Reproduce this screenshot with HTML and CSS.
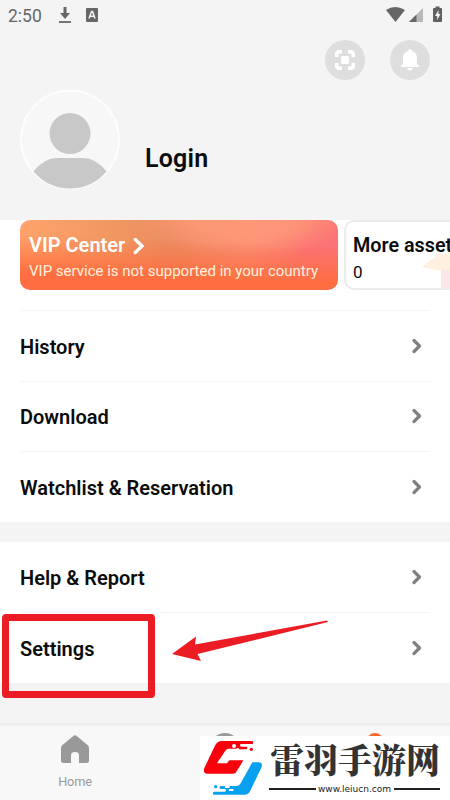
FILE: index.html
```html
<!DOCTYPE html>
<html lang="en">
<head>
<meta charset="utf-8">
<title>Profile</title>
<link rel="stylesheet" href="styles.css">
</head>
<body>
<div class="screen">
  <header class="statusbar">
    <span class="clock">2:50</span>
    <svg class="dl" width="14" height="18" viewBox="0 0 14 18"><path d="M7 1v9" stroke="#666" stroke-width="3"/><path d="M2 7h10l-5 6z" fill="#666"/><path d="M1 16h12" stroke="#666" stroke-width="1.8"/></svg>
    <svg class="abox" width="12" height="14" viewBox="0 0 12 14"><rect width="12" height="14" rx="1" fill="#666"/><path d="M3 10.5L5.6 3.5h1L9 10.5M4 8.3h4" fill="none" stroke="#f3f3f3" stroke-width="1.5"/></svg>
    <svg class="signals" width="60" height="18" viewBox="0 0 60 18"><path d="M1 4Q10 -2 20 4L10.500 16z" fill="#666"/><path d="M38 2v14H24z" fill="#b8b8b8"/><path d="M31.500 8.500V16H24z" fill="#666"/><path d="M49 2h1.500V.5h4V2H56q1 0 1 1v12q0 1-1 1h-7q-1 0-1-1V3q0-1 1-1z" fill="#606060"/><path d="M53.500 4L50 10h2.200v4L55.500 8h-2z" fill="#f3f3f3"/></svg>
  </header>
  <div class="actions">
    <span class="round"><svg width="22" height="22" viewBox="0 0 22 22"><path d="M2.700 8V5.500q0-2.800 2.800-2.800H8M14 2.700h2.500q2.800 0 2.800 2.800V8M19.300 14v2.500q0 2.800-2.800 2.800H14M8 19.300H5.500q-2.800 0-2.800-2.800V14" fill="none" stroke="#fff" stroke-width="3.600"/><rect x="7" y="7" width="8" height="8" rx="1.500" fill="#fff"/></svg></span>
    <span class="round"><svg width="20" height="24" viewBox="0 0 20 24"><path d="M10 1q2 0 2 2 5 1.300 5 7v5.500q0 1.500 2 2V19H1v-1.500q2-.5 2-2V10q0-5.700 5-7 0-2 2-2zM7 20h6q-.5 2.500-3 2.500T7 20z" fill="#fff"/></svg></span>
  </div>
  <section class="account">
    <svg width="100" height="100" viewBox="0 0 100 100"><circle cx="50" cy="49.500" r="49" fill="#f7f7f7" stroke="#fdfdfd" stroke-width="2"/><circle cx="50" cy="43.500" r="20.500" fill="#c8c8c8"/><path d="M13.500 81.500Q24 68 37 68H63Q76 68 86.500 81.500Q72 98.500 50 98.500T13.500 81.500z" fill="#c8c8c8"/></svg>
    <span class="login">Login</span>
  </section>
  <section class="cards">
    <div class="vip">
      <div class="card-title">VIP Center <svg width="12" height="18" viewBox="0 0 12 18"><path d="M2.300 2.500L9 9l-6.700 6.500" fill="none" stroke="#fff" stroke-width="3.300" stroke-linecap="round"/></svg></div>
      <div class="vip-sub">VIP service is not supported in your country</div>
    </div>
    <div class="assets">
      <svg class="deco" width="30" height="36" viewBox="0 0 30 36"><path d="M0 14L18 0l12 2v17L3 15z" fill="#fff0df"/><path d="M19 16l11 2v18H19z" fill="#fae8e8"/></svg>
      <div class="card-title">More assets</div>
      <div class="count">0</div>
    </div>
  </section>
  <nav class="menu">
    <div class="row">History<svg width="12" height="16" viewBox="0 0 12 16"><path d="M3 2.500L8.500 8 3 13.500" class="chev"/></svg></div>
    <div class="row">Download<svg width="12" height="16" viewBox="0 0 12 16"><path d="M3 2.500L8.500 8 3 13.500" class="chev"/></svg></div>
    <div class="row">Watchlist &amp; Reservation<svg width="12" height="16" viewBox="0 0 12 16"><path d="M3 2.500L8.500 8 3 13.500" class="chev"/></svg></div>
  </nav>
  <nav class="menu support">
    <div class="row">Help &amp; Report<svg width="12" height="16" viewBox="0 0 12 16"><path d="M3 2.500L8.500 8 3 13.500" class="chev"/></svg></div>
    <div class="row">Settings<svg width="12" height="16" viewBox="0 0 12 16"><path d="M3 2.500L8.500 8 3 13.500" class="chev"/></svg></div>
  </nav>
  <footer class="tabs">
    <div class="tab"><svg width="28" height="28" viewBox="0 0 28 28"><path d="M12.300 1q1.700-1.300 3.400 0L26.500 10q1.500 1.200 1.500 3v12.500Q28 28 25.500 28H18v-8q0-3-4-3t-4 3v8H2.500Q0 28 0 25.500V13q0-1.800 1.500-3z" fill="#999"/></svg><span>Home</span></div>
    <div class="tab partial"><svg width="28" height="28" viewBox="0 0 28 28"><circle cx="14" cy="14" r="14" fill="#999"/></svg></div>
    <div class="tab partial"><svg width="28" height="28" viewBox="0 0 28 28"><circle cx="14" cy="8.500" r="8.500" fill="#ff682b"/></svg></div>
  </footer>
  <div class="highlight"></div>
  <svg class="arrow" width="160" height="46" viewBox="0 0 160 46"><path d="M0 39L24 21.500 23 29.500 155 5.500 156 7 25.500 39 29 46z" fill="#ec1c24"/></svg>
  <aside class="watermark">
    <svg class="mark" width="63" height="64" viewBox="30 48 189 192">
      <path d="M95 63H186q4 0 4 4.500t-4 4.500H154a4 4 0 0 0 0 8h14q4 0 4 4t-4 4h-20a5 5 0 0 0-9-2H116Q110 86 106 92L81 130H111L118 121H160L142 151Q137 161 130 161H52Q38 160 43 144L76 75Q83 63 95 63z" fill="#f8000c"/>
      <circle cx="132" cy="78" r="6" fill="#fff"/><circle cx="184" cy="88" r="5" fill="#f8000c"/>
      <path d="M187 127H206Q220 128 214 143L181 212Q175 224 164 224H73a4.500 4.500 0 0 1 0-9H104a4 4 0 0 0 0-8H93a4.500 4.500 0 0 1 0-9H138Q146 199 151 191z" fill="#08a0f0"/>
      <circle cx="77" cy="200" r="5" fill="#08a0f0"/><path d="M107 201h9M119 210h9" stroke="#fff" stroke-width="6" stroke-linecap="round"/>
    </svg>
    <div class="brand"><div class="brand-name">雷羽手游网</div><div class="site"><span>www.leiucn.com</span></div></div>
  </aside>
</div>
</body>
</html>
```
FILE: styles.css
```css
* { box-sizing: border-box; }
body { margin: 0; font-family: Roboto, sans-serif; color: #0c0c0c; }
svg { display: block; flex: none; }
.screen { position: relative; width: 450px; height: 800px; overflow: hidden; background: #f4f4f4; }
.statusbar { display: flex; align-items: center; height: 30px; padding: 0 8px; }
.clock { width: 50px; font-size: 17.5px; color: #666; line-height: 30px; padding-top: 1px; }
.abox { margin-left: 14px; }
.signals { margin-left: auto; margin-right: -3px; }
.actions { display: flex; justify-content: flex-end; gap: 25px; padding: 10px 20px 0; }
.round { display: flex; align-items: center; justify-content: center; width: 40px; height: 40px; border-radius: 50%; background: #dedede; }
.account { display: flex; height: 140px; padding: 10px 20px 0; }
.login { margin: 54px 0 0 25px; font-size: 25px; line-height: 30px; font-weight: 600; letter-spacing: .2px; }
.cards { display: flex; gap: 6px; height: 90px; padding-left: 20px; background: #fff; }
.vip { flex: none; width: 318px; height: 70px; padding: 14px 9px; border-radius: 10px; color: #fff; background: linear-gradient(182deg, #ff6c4000 32%, #ff6e40 80%), radial-gradient(ellipse 110px 42px at 225px -4px, #ff9b78cc 0 50%, #ff9b7800 100%), linear-gradient(90deg, #ffa36b 0, #f09760 30%, #ea8a60 48%, #f98a72 72%, #fb7275 90%); }
.card-title { display: flex; align-items: center; gap: 9px; font-size: 19.8px; line-height: 23px; font-weight: 600; white-space: nowrap; }
.vip .card-title { font-size: 20px; gap: 8px; }
.vip-sub { margin-top: 5px; font-size: 15px; line-height: 18px; color: #fff0dc; white-space: nowrap; }
.assets { position: relative; flex: none; width: 150px; height: 70px; padding: 12px 7px; border: 2px solid #ebebeb; border-radius: 10px; background: #fff; }
.assets > div { position: relative; }
.deco { position: absolute; left: 76px; top: 31px; }
.count { margin-top: 6px; font-size: 17px; line-height: 19px; }
.menu { padding: 0 20px; background: #fff; }
.support { margin-top: 20px; }
.row { display: flex; align-items: center; justify-content: space-between; height: 70.6px; padding: 2px 7px 0 0; border-top: 1px solid #f5f5f5; font-size: 20px; font-weight: 600; }
.row svg { margin-top: -2px; }
.support .row:first-child { border-color: #fff; padding-top: 1px; }
.chev { fill: none; stroke: #808080; stroke-width: 3.2; stroke-linecap: round; stroke-linejoin: round; }
.tabs { display: flex; height: 77px; margin-top: 40px; padding-top: 9px; border-top: 3px solid #eee; background: #f8f8f8; }
.tab { display: flex; flex: 1; flex-direction: column; align-items: center; font-size: 12.7px; color: #999; }
.partial { margin-top: -2px; }
.tab span { margin-top: 11px; letter-spacing: -.1px; }
.highlight { position: absolute; left: 2px; top: 614px; width: 153px; height: 84px; border: 7px solid #ec1c24; border-radius: 4px; }
.arrow { position: absolute; left: 172px; top: 615px; }
.watermark { position: absolute; left: 200px; top: 736px; display: flex; width: 250px; height: 64px; background: #fff; }
.brand { width: 171px; margin-left: 6px; }
.brand-name { height: 45px; margin: 0 0 0 1px; font: 900 34px/45px "Noto Serif CJK SC", "Noto Sans CJK SC", serif; color: #333; white-space: nowrap; }
.site { display: flex; align-items: center; gap: 2px; margin-top: 1px; font: 9px/14px "DejaVu Sans", sans-serif; color: #222; }
.site span { width: 74px; text-align: center; white-space: nowrap; }
.site::before, .site::after { content: ""; flex: 1; height: 2px; background: #222; }
```
